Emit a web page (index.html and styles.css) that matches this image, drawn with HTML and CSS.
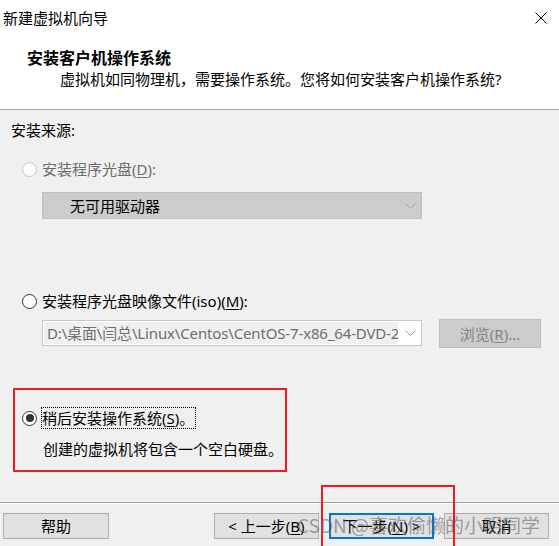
FILE: index.html
```html
<!DOCTYPE html>
<html lang="zh-CN">
<head>
<meta charset="utf-8">
<title>新建虚拟机向导</title>
<link rel="stylesheet" href="styles.css">
</head>
<body>
<div class="window">
  <div class="titlebar">
    <span class="title">新建虚拟机向导</span>
    <svg class="close" width="12" height="12" viewBox="0 0 12 12"><path d="M0.5 0.5 L11.5 11.5 M11.5 0.5 L0.5 11.5" stroke="#000" stroke-width="1" fill="none"/></svg>
  </div>
  <div class="header">
    <div class="heading">安装客户机操作系统</div>
    <div class="subtitle">虚拟机如同物理机，需要操作系统。您将如何安装客户机操作系统?</div>
  </div>
  <div class="content">
    <div class="section-label">安装来源:</div>
    <div class="radio-row row-disc disabled"><span class="radio"></span><span class="label">安装程序光盘(<u>D</u>):</span></div>
    <div class="select">
      <span class="select-text">无可用驱动器</span>
      <svg class="chevron" width="11" height="6" viewBox="0 0 11 6"><path d="M0.5 0.5 L5.5 5.5 L10.5 0.5" stroke="#a0a0a0" fill="none"/></svg>
    </div>
    <div class="radio-row row-iso"><span class="radio"></span><span class="label">安装程序光盘映像文件(iso)(<u>M</u>):</span></div>
    <div class="iso-row">
      <div class="combo">
        <span class="combo-text">D:\桌面\闫总\Linux\Centos\CentOS-7-x86_64-DVD-2009.iso</span>
        <svg class="chevron" width="11" height="6" viewBox="0 0 11 6"><path d="M0.5 0.5 L5.5 5.5 L10.5 0.5" stroke="#a0a0a0" fill="none"/></svg>
      </div>
      <div class="browse">浏览(<u>R</u>)...</div>
    </div>
    <div class="highlight">
      <div class="radio-row inner"><span class="radio checked"></span><span class="label focus">稍后安装操作系统(<u>S</u>)。</span></div>
      <div class="desc">创建的虚拟机将包含一个空白硬盘。</div>
    </div>
  </div>
  <div class="footer">
    <div class="btn help">帮助</div>
    <div class="nav">
      <div class="btn">&lt; 上一步(<u>B</u>)</div>
      <div class="btn primary">下一步(<u>N</u>) &gt;</div>
      <div class="btn">取消</div>
    </div>
  </div>
  <div class="mark-box"></div>
  <div class="watermark">CSDN @喜欢偷懒的小明同学</div>
</div>
</body>
</html>
```
FILE: styles.css
```css
* { box-sizing: border-box; }
html, body { margin: 0; padding: 0; }
body {
  width: 559px;
  height: 546px;
  overflow: hidden;
  background: #f0f0f0;
  font-family: "Noto Sans", "Noto Sans CJK SC", sans-serif;
  font-size: 15px;
  line-height: 20px;
  color: #000;
}
u { text-decoration: underline; text-underline-offset: 2px; }
.window { position: relative; width: 559px; height: 546px; }

.titlebar {
  height: 36px;
  background: #fff;
  display: flex;
  align-items: center;
  justify-content: space-between;
  padding: 0 12px 0 3px;
}
.title { line-height: 36px; }
.close { display: block; }

.header {
  background: #fff;
  padding: 12px 0 20px 0;
  border-bottom: 1px solid #a0a0a0;
}
.heading {
  font-weight: bold;
  font-size: 16px;
  padding-left: 27px;
}
.subtitle {
  margin-top: 1px;
  padding-left: 60px;
}

.content { padding-top: 10px; }
.section-label { padding-left: 11px; }

.radio-row {
  display: flex;
  align-items: center;
  padding-left: 22px;
  height: 20px;
}
.radio-row.inner { padding-left: 0; }
.row-disc { margin-top: 19px; }
.row-iso { margin-top: 72px; }
.radio {
  width: 15px;
  height: 15px;
  border-radius: 50%;
  border: 1px solid #333;
  background: #fff;
  margin-right: 5px;
  flex: none;
  display: flex;
  align-items: center;
  justify-content: center;
}
.disabled .radio { border-color: #c4c4c4; background: #fcfcfc; }
.disabled .label { color: #6d6d6d; }
.radio.checked::after {
  content: "";
  width: 8px;
  height: 8px;
  border-radius: 50%;
  background: #333;
}
.focus {
  outline: 1px dotted #000;
  outline-offset: 0;
  padding-right: 1px;
}

.select {
  margin: 13px 0 0 42px;
  width: 380px;
  height: 27px;
  background: #cccccc;
  border: 1px solid #bfbfbf;
  display: flex;
  align-items: center;
  justify-content: space-between;
  padding: 0 4px 0 27px;
}
.chevron { display: block; margin-right: 1px; }

.iso-row {
  display: flex;
  margin-top: 8px;
  height: 29px;
}
.combo {
  margin: 1px 0 0 42px;
  width: 380px;
  height: 26px;
  background: #fff;
  border: 1px solid #c8c8c8;
  display: flex;
  align-items: center;
  justify-content: space-between;
  padding: 0 4px 0 1px;
}
.combo-text {
  width: 354px;
  height: 22px;
  line-height: 22px;
  background: #f0f0f0;
  color: #6d6d6d;
  padding-left: 3px;
  white-space: nowrap;
  overflow: hidden;
  letter-spacing: -0.15px;
}
.browse {
  margin-left: 17px;
  width: 102px;
  height: 29px;
  background: #cccccc;
  border: 1px solid #bfbfbf;
  color: #838383;
  display: flex;
  align-items: center;
  justify-content: center;
}

.highlight {
  margin: 40px 0 0 13px;
  width: 274px;
  height: 84px;
  border: 2px solid #ed1c24;
  padding: 18px 0 0 7px;
}
.desc { margin-top: 11px; padding-left: 21px; }

.footer {
  margin-top: 30px;
  border-top: 1px solid #a0a0a0;
  box-shadow: inset 0 1px 0 #fff;
  padding: 10px 10px 0 3px;
  display: flex;
  justify-content: space-between;
}
.nav { display: flex; gap: 10px; }
.btn {
  width: 105px;
  height: 26px;
  background: #e1e1e1;
  border: 1px solid #adadad;
  display: flex;
  align-items: center;
  justify-content: center;
}
.btn.help { width: 106px; }
.btn.primary { border: 2px solid #0078d7; }

.mark-box {
  position: absolute;
  left: 321px;
  top: 485px;
  width: 134px;
  height: 80px;
  border: 2px solid #ed1c24;
}
.watermark {
  position: absolute;
  left: 297px;
  top: 513px;
  font-size: 19px;
  line-height: 24px;
  color: rgba(90, 90, 90, 0.55);
  white-space: nowrap;
  font-family: "Noto Sans CJK SC", sans-serif;
}
```
